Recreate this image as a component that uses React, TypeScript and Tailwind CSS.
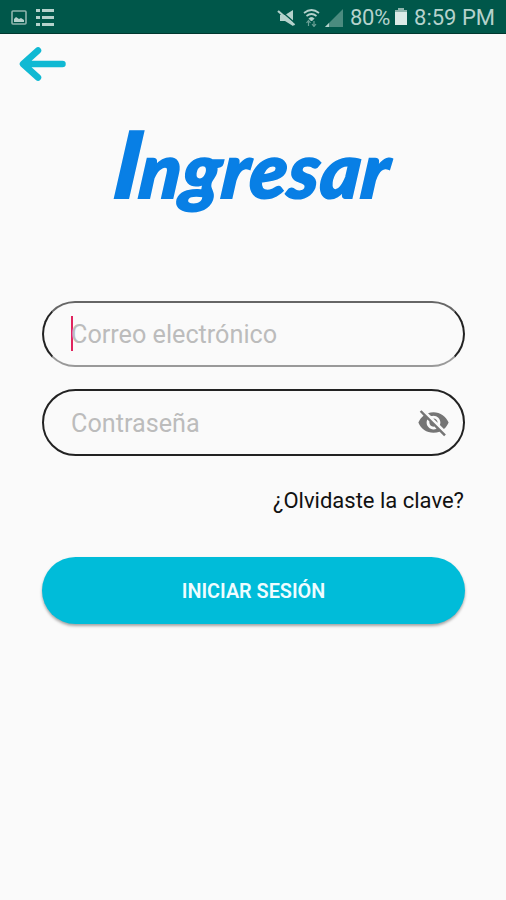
import { useState } from 'react';

function StatusBar() {
    return (
        <header className="flex h-[34px] items-center justify-between border-b border-[#00382f] bg-[#00574a] pl-[11px] pr-[11px] text-[#b5d2cc]">
            {/* notifications */}
            <div className="flex items-center gap-[9px] pt-[2px]">
                <svg width="16" height="15" viewBox="0 0 16 15" fill="none">
                    <rect x="1" y="1" width="14" height="13" rx="1" stroke="#8fb5ad" strokeWidth="1.6" />
                    <path d="M3 12V9l2-2 3 2 2-1 3 2v2z" fill="currentColor" />
                </svg>
                <svg width="18" height="17" viewBox="0 0 18 17" fill="currentColor">
                    <path d="M0 0h4v3H0zM6 0h12v3H6zM0 7h4v3H0zM6 7h12v3H6zM0 14h4v3H0zM6 14h12v3H6z" />
                </svg>
            </div>

            {/* system */}
            <div className="flex items-center pt-[3px]">
                <svg className="mr-[7px]" width="19" height="18" viewBox="0 0 19 18">
                    <path d="M3 6h5l8-5v16l-8-5H3z" fill="currentColor" />
                    <path d="M3 1L19 15" stroke="#00574a" strokeWidth="1.500" />
                    <path d="M1 2L17.500 16" stroke="currentColor" strokeWidth="2.200" />
                </svg>
                <svg className="mr-[5px]" width="17" height="18" viewBox="0 0 17 18" fill="none" stroke="currentColor">
                    <path d="M1 4q7.500-6 15 0M3.500 7q5-4 10 0" strokeWidth="1.7" />
                    <path d="M6 9.500q2.500-2 5 0L8.500 12z" fill="currentColor" strokeWidth="1" />
                    <path d="M5.500 12v5M3.500 14l2-2.500 2 2.500M11 12v5M9 15l2 2.500 2-2.500" stroke="#699f95" strokeWidth="1.200" />
                </svg>
                <svg className="mr-[7px]" width="18" height="18" viewBox="0 0 18 18">
                    <path d="M0 18L18 0v18z" fill="#4b8b7f" />
                    <path d="M0 18l4-4v4z" fill="currentColor" />
                </svg>
                <span className="w-[41px] whitespace-nowrap text-[22px] leading-none tracking-[-0.3px]">80%</span>
                <svg className="mb-[3px] ml-[4px] mr-[7px]" width="12" height="17" viewBox="0 0 12 17">
                    <path d="M3 0h6v2h3v3H0V2h3z" fill="#8fb5ad" />
                    <path d="M0 4h12v13H0z" fill="#dcebe7" />
                </svg>
                <span className="whitespace-nowrap text-[22px] leading-none">8:59 PM</span>
            </div>
        </header>
    );
}

export default function App() {
    const [email, setEmail] = useState('');
    const [password, setPassword] = useState('');
    const [visible, setVisible] = useState(false);

    return (
        <div className="flex h-[900px] w-[506px] flex-col overflow-hidden bg-[#fafafa] font-['Roboto',sans-serif]">
            <StatusBar />

            <button className="ml-[19px] mt-[12px] h-[36px] w-[48px]" aria-label="Volver">
                <svg width="48" height="36" viewBox="0 0 48 36" fill="none">
                    <path
                        d="M19 4.500L4 18l15 13.500M5 18h38.500"
                        stroke="#10b9d3"
                        strokeWidth="6.500"
                        strokeLinecap="round"
                        strokeLinejoin="round"
                    />
                </svg>
            </button>

            {/* title */}
            <h1 className="mt-[26px] flex h-[110px] items-baseline justify-center whitespace-nowrap font-['Lato',sans-serif] text-[76px] font-black italic leading-[110px] tracking-[1.2px] text-[#087fe5] [-webkit-text-stroke:2px_#087fe5]">
                <span className="inline-block -skew-x-6">
                    <span className="mr-[-2px] text-[92px]">I</span>ngresar
                </span>
            </h1>

            <form className="ml-[42px] mr-[41px] mt-[83px] flex flex-col" onSubmit={(e) => e.preventDefault()}>
                <div className="flex h-[66px] items-center rounded-full border-2 border-x-[#222] border-b-[#999] border-t-[#666] pb-[1px] pl-[27px] pr-6">
                    <span className="h-[35px] w-[2px] shrink-0 bg-[#e0245e]" />
                    <input
                        className="-ml-[2px] h-full w-full bg-transparent pt-[2px] text-[25.2px] text-black outline-none placeholder:text-[#bcbcbc]"
                        placeholder="Correo electrónico"
                        value={email}
                        onChange={(e) => setEmail(e.target.value)}
                    />
                </div>

                <div className="mt-[22px] flex h-[67px] items-center rounded-full border-2 border-[#222] pl-[27px] pr-[13px]">
                    <input
                        className="h-full w-full min-w-0 flex-1 bg-transparent pt-[1px] text-[25.2px] text-black outline-none placeholder:text-[#bcbcbc]"
                        type={visible ? 'text' : 'password'}
                        placeholder="Contraseña"
                        value={password}
                        onChange={(e) => setPassword(e.target.value)}
                    />
                    <button type="button" onClick={() => setVisible(!visible)} aria-label="Mostrar contraseña">
                        <svg width="33" height="33" viewBox="0 0 24 24" fill="#757575">
                            <path d="M12 7c2.760 0 5 2.240 5 5 0 .65-.13 1.260-.36 1.830l2.920 2.920c1.510-1.260 2.700-2.890 3.430-4.750-1.730-4.390-6-7.500-11-7.500-1.400 0-2.740.25-3.980.7l2.160 2.160C10.740 7.130 11.350 7 12 7zM2 4.270l2.280 2.280.46.46C3.080 8.300 1.780 10.020 1 12c1.730 4.390 6 7.500 11 7.500 1.550 0 3.030-.3 4.380-.84l.42.42L19.730 22 21 20.730 3.270 3 2 4.270zM7.530 9.800l1.550 1.550c-.05.21-.08.43-.08.65 0 1.660 1.340 3 3 3 .22 0 .44-.03.65-.08l1.550 1.550c-.67.33-1.410.53-2.200.53-2.760 0-5-2.240-5-5 0-.79.2-1.530.53-2.200zm4.310-.78l3.150 3.150.02-.16c0-1.660-1.340-3-3-3l-.17.01z" />
                        </svg>
                    </button>
                </div>

                <a href="#" className="mr-[1px] mt-[30px] self-end whitespace-nowrap text-[22px] leading-[30px] text-[#111]">
                    ¿Olvidaste la clave?
                </a>

                <button
                    type="submit"
                    className="mt-[41px] h-[67px] rounded-full bg-[#00bcd9] pt-[2px] text-[19.8px] font-semibold text-[#effcff] shadow-[0_2px_3px_rgba(0,0,0,0.35)]"
                >
                    INICIAR SESIÓN
                </button>
            </form>
        </div>
    );
}
